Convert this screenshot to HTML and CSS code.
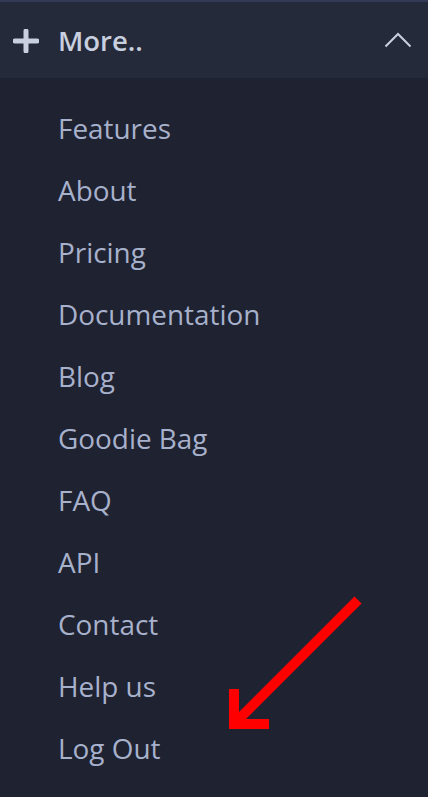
FILE: index.html
```html
<!DOCTYPE html>
<html>
<head>
<meta charset="utf-8">
<link rel="stylesheet" href="styles.css">
</head>
<body>
<div class="menu">
  <div class="header">
    <svg class="plus" width="26" height="24" viewBox="0 0 26 24"><path d="M13 2v20M2 12h22" stroke="#c8cfdf" stroke-width="5" stroke-linecap="round"/></svg>
    <span class="title">More..</span>
    <svg class="chev" width="28" height="16" viewBox="0 0 28 16"><path d="M1.5 14.5L14 2 26.5 14.5" fill="none" stroke="#c8cfdf" stroke-width="2"/></svg>
  </div>
  <ul class="list">
    <li>Features</li>
    <li>About</li>
    <li>Pricing</li>
    <li>Documentation</li>
    <li>Blog</li>
    <li>Goodie Bag</li>
    <li>FAQ</li>
    <li>API</li>
    <li>Contact</li>
    <li>Help us</li>
    <li>Log Out</li>
  </ul>
  <svg class="arrow" width="428" height="797" viewBox="0 0 428 797">
    <path d="M358 600L236 722" stroke="#ff0000" stroke-width="10"/>
    <path d="M234 689V724H269" fill="none" stroke="#ff0000" stroke-width="10"/>
  </svg>
</div>
</body>
</html>
```
FILE: styles.css
```css
html, body {
  margin: 0;
  padding: 0;
  background: #1f2230;
}
.menu {
  position: relative;
  width: 428px;
  height: 797px;
  overflow: hidden;
  font-family: "Open Sans", sans-serif;
}
.header {
  height: 76px;
  border-top: 2px solid #333a55;
  background: #252a3b;
  display: flex;
  align-items: center;
  padding-left: 13px;
  padding-right: 16px;
}
.plus {
  flex: none;
  margin-top: 2px;
}
.title {
  margin-left: 19px;
  font-size: 27.5px;
  font-weight: 600;
  color: #c8cfdf;
  flex: 1;
}
.chev {
  flex: none;
}
.list {
  list-style: none;
  margin: 0;
  padding: 19px 0 0 58px;
}
.list li {
  height: 62px;
  line-height: 62px;
  font-size: 27.9px;
  color: #a7b1cc;
}
.arrow {
  position: absolute;
  left: 0;
  top: 0;
  pointer-events: none;
}
```
